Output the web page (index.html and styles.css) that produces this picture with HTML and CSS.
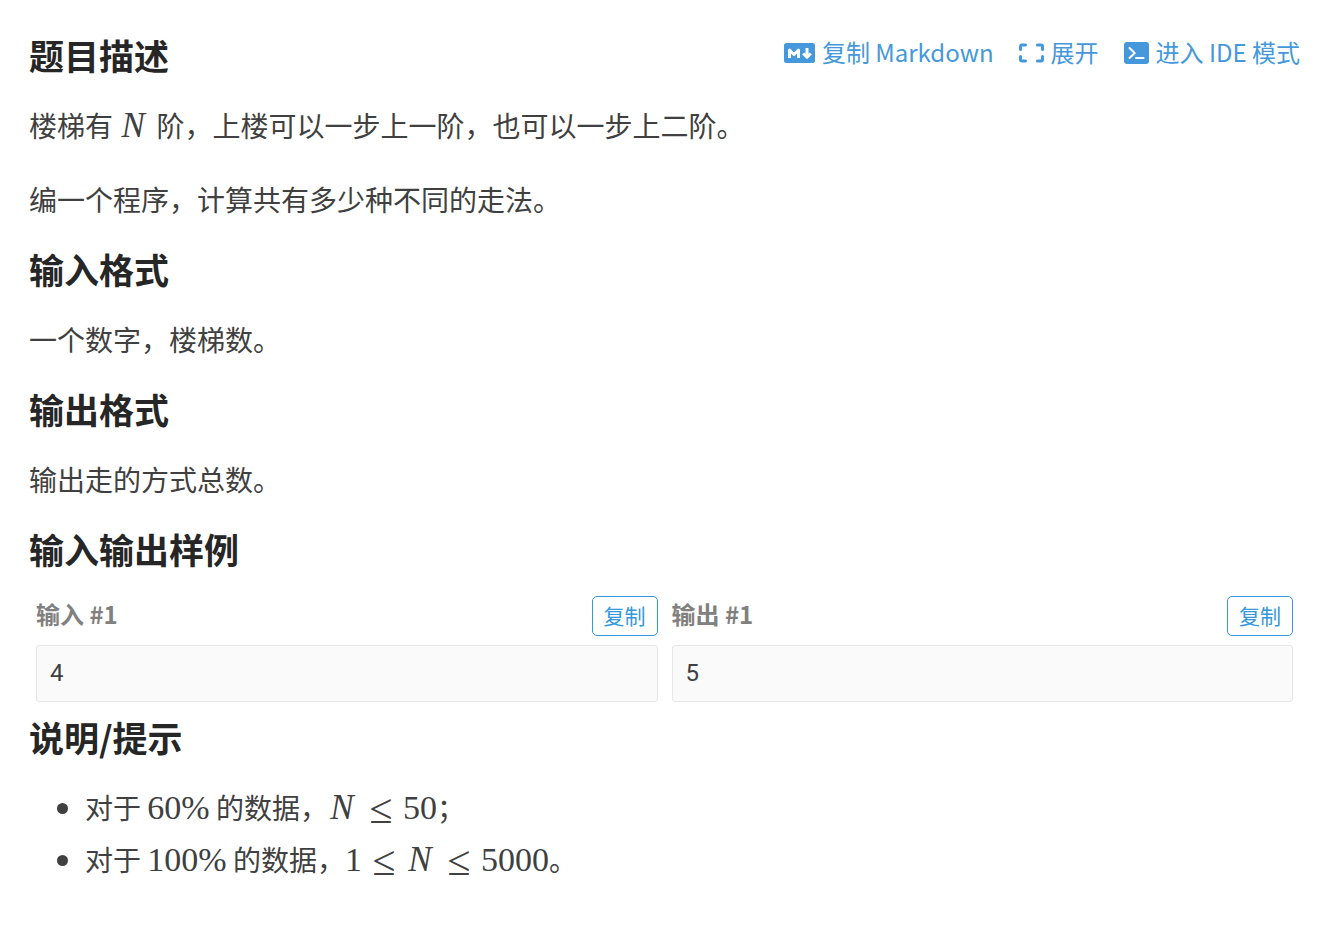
FILE: index.html
```html
<!DOCTYPE html>
<html lang="zh-CN">
<head>
<meta charset="utf-8">
<meta name="viewport" content="width=device-width, initial-scale=1">
<title>题目描述</title>
<link rel="stylesheet" href="styles.css">
</head>
<body>
<main class="problem">
  <header class="top">
    <h2>题目描述</h2>
    <nav class="actions">
      <a href="#markdown"><svg class="icon-md" viewBox="0 0 31 20" aria-hidden="true"><rect width="31" height="20" rx="2.500" fill="currentColor"/><path d="M5.500 15v-8l4.500 4.500 4.500-4.500v8M23 5v8M19.200 10.500l3.800 3.800 3.800-3.800" fill="none" stroke="#fff" stroke-width="3" stroke-linejoin="round"/></svg><span>复制 Markdown</span></a>
      <a href="#expand"><svg class="icon-expand" viewBox="0 0 25 20" aria-hidden="true"><path d="M6.500 2H3Q1.500 2 1.500 3.500V6.500M18.500 2h3.500q1.500 0 1.500 1.500V6.500M6.500 18H3Q1.500 18 1.500 16.500V13.500M18.500 18h3.500q1.500 0 1.500-1.500V13.500" fill="none" stroke="currentColor" stroke-width="3" stroke-linecap="round"/></svg><span>展开</span></a>
      <a href="#ide"><svg class="icon-ide" viewBox="0 0 25 22" aria-hidden="true"><rect width="25" height="22" rx="3" fill="currentColor"/><path d="M5.500 6l5.200 5-5.200 5M12 16h7.500" fill="none" stroke="#fff" stroke-width="2" stroke-linecap="round" stroke-linejoin="round"/></svg><span>进入 IDE 模式</span></a>
    </nav>
  </header>
  <p>楼梯有 <span class="math"><i>N</i></span> 阶，上楼可以一步上一阶，也可以一步上二阶。</p>
  <p>编一个程序，计算共有多少种不同的走法。</p>
  <h2>输入格式</h2>
  <p>一个数字，楼梯数。</p>
  <h2>输出格式</h2>
  <p>输出走的方式总数。</p>
  <h2>输入输出样例</h2>
  <div class="samples">
    <section class="sample">
      <div class="sample-head"><h3>输入 #1</h3><button type="button">复制</button></div>
      <pre>4</pre>
    </section>
    <section class="sample">
      <div class="sample-head"><h3>输出 #1</h3><button type="button">复制</button></div>
      <pre>5</pre>
    </section>
  </div>
  <h2>说明/提示</h2>
  <ul>
    <li>对于 <span class="math">60%</span> 的数据，<span class="math"><i>N</i><span class="rel">≤</span>50</span>；</li>
    <li>对于 <span class="math">100%</span> 的数据，<span class="math">1<span class="rel">≤</span><i>N</i><span class="rel">≤</span>5000</span>。</li>
  </ul>
</main>
</body>
</html>
```
FILE: styles.css
```css
* { box-sizing: border-box; }
body {
  margin: 0;
  background: #fff;
  color: #404040;
  font: 28px/46px "Noto Sans CJK SC", sans-serif;
}
.problem { padding: 36px 33px 38px 29px; }
h2, h3, p, pre, ul { margin: 0; }
p { margin-top: 28px; }
h2 {
  margin-top: 28px;
  color: #262626;
  font-size: 35px;
  line-height: 38px;
  font-weight: 700;
}
.top { display: flex; justify-content: space-between; align-items: flex-start; }
.top h2 { margin-top: 0; }
.actions { display: flex; gap: 25px; line-height: 32px; font-size: 24px; }
.actions a {
  display: flex;
  align-items: center;
  gap: 7px;
  color: #4498db;
  text-decoration: none;
}
.actions svg { display: block; flex: none; margin-top: 2px; }
.icon-md { width: 31px; height: 20px; }
.icon-expand { width: 25px; height: 20px; }
.icon-ide { width: 25px; height: 22px; }
.samples {
  display: grid;
  grid-template-columns: 1fr 1fr;
  gap: 14px;
  margin: 28px 7px 16px;
}
.samples + h2 { margin-top: 0; }
.sample-head {
  display: flex;
  justify-content: space-between;
  align-items: flex-start;
  margin-bottom: 9px;
}
h3 { color: #808080; font-size: 24px; line-height: 36px; font-weight: 700; }
button {
  height: 40px;
  padding: 0 11px 2px;
  border: 1px solid #3498db;
  border-radius: 5px;
  background: #fff;
  color: #3498db;
  font: 21px/36px "Noto Sans CJK SC", sans-serif;
}
pre {
  padding: 12px 13px;
  border: 1px solid #e6e6e6;
  border-radius: 3px;
  background: #fafafa;
  font: 24px/31px Roboto, sans-serif;
}
ul { margin-top: 28px; padding-left: 56px; list-style: none; }
li { position: relative; }
li + li { margin-top: 6px; }
li::before {
  content: "";
  position: absolute;
  top: 19px;
  left: -28px;
  width: 11px;
  height: 11px;
  border-radius: 50%;
  background: #404040;
}
.math { font-family: "Liberation Serif", serif; font-size: 34px; line-height: 40px; }
.math i { display: inline-block; width: 31px; padding-right: 3px; font-size: 35px; text-align: center; }
.rel {
  display: inline-block;
  width: 24px;
  margin: 0 10px;
  font-size: 42px;
  line-height: 36px;
  vertical-align: -4px;
  text-align: center;
}
```
